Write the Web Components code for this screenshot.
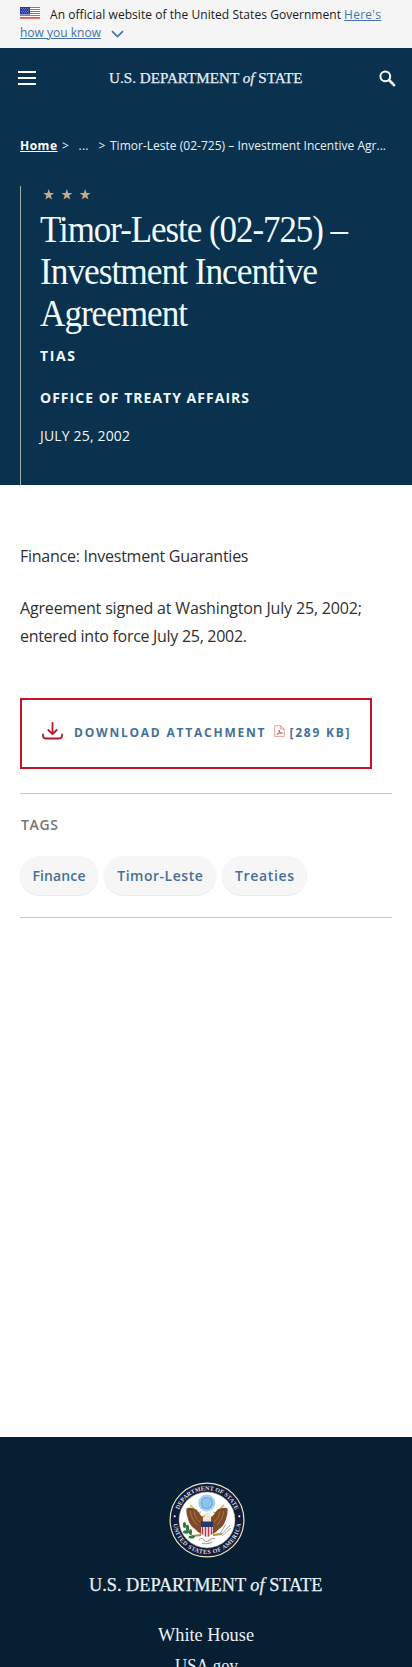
<!DOCTYPE html>
<html lang="en"><head><meta charset="utf-8"><title>Timor-Leste (02-725) – Investment Incentive Agreement</title>
<style>html,body{margin:0;background:#fff}body{font-family:"Open Sans",sans-serif;width:412px;height:1667px;overflow:hidden}</style></head>
<body><state-page></state-page>
<script>
const define=(name,html)=>{
  const t=document.createElement('template');t.innerHTML=html;
  customElements.define(name,class extends HTMLElement{
    constructor(){super();this.attachShadow({mode:'open'}).append(t.content.cloneNode(true));}
  });
};
// A single line of text set to a given measure, by tracking or by condensing.
class FitLine extends HTMLElement{
  constructor(){super();this.attachShadow({mode:'open'}).innerHTML=`<style>:host{display:block;white-space:nowrap;flex:none}span{display:inline-block;transform-origin:0 0;vertical-align:top;text-decoration:var(--line,none)}</style><span><slot></slot></span>`;}
  connectedCallback(){
    const w=+this.getAttribute('w'),s=this.shadowRoot.querySelector('span');
    this.style.width=w+'px';
    const n=s.getBoundingClientRect().width;
    if(this.hasAttribute('condense'))s.style.transform=`scaleX(${w/n})`;
    else s.style.letterSpacing=(w-n)/(this.textContent.length-1)+'px';
  }
}
define('gov-banner',`<style>
:host{display:block;height:42px;padding:6px 20px 0;background:#f5f5f5;font-size:12px;line-height:18px;color:#1b1b1b}
div{display:flex;align-items:center}.link{color:#4773aa;--line:underline}
.flag{margin:-4px 10px 0 0}.chev{margin:1px 0 0 10px}</style>
<div><svg class="flag" width="20" height="12" viewBox="0 0 20 12"><path fill="#fff" d="M0 0h20v12H0z"/><path stroke="#db3e1f" stroke-width="1" d="M0 .5h20M0 2.5h20M0 4.5h20M0 6.5h20M0 8.5h20M0 10.5h20M0 11.7h20" opacity=".85"/><path fill="#2a3aa0" d="M0 0h10v7.5H0z"/><path stroke="#a9b2e0" stroke-width=".7" stroke-dasharray=".8 1.2" d="M1 1.5h8M2 3h8M1 4.5h8M2 6h8"/></svg>
<fit-line w="291">An official website of the United States Government</fit-line><fit-line class="link" w="37" style="margin-left:3px">Here's</fit-line></div>
<div><fit-line class="link" w="81">how you know</fit-line><svg class="chev" width="13" height="8" viewBox="0 0 13 8"><path d="M1 1.2l5.5 5.3L12 1.2" fill="none" stroke="#4773aa" stroke-width="1.7"/></svg></div>`);
define('site-header',`<style>
:host{display:flex;height:60px;align-items:center;padding:0 16px 0 18px;color:#fff}
.logo{display:flex;font:15.4px/20px "Liberation Serif",serif;margin:0 76.500px 0 73px;color:#e4eef6;padding-bottom:1px;-webkit-text-stroke:.25px #e4eef6}</style>
<svg width="18" height="14" viewBox="0 0 18 14"><path d="M0 1h18M0 7h18M0 13h18" stroke="#fff" stroke-width="2"/></svg>
<div class="logo"><fit-line condense w="193.5">U.S. DEPARTMENT <i>of</i> STATE</fit-line></div>
<svg width="17" height="17" viewBox="0 0 17 17"><circle cx="6.3" cy="6.3" r="4.9" fill="none" stroke="#fff" stroke-width="2"/><path d="M10 10l5.8 5.8" stroke="#fff" stroke-width="2.6"/></svg>`);
define('bread-crumbs',`<style>:host{display:flex;height:18px;margin:29px 20px 0;font-size:12px;line-height:18px;color:#e6f0f7}b{font-weight:700;--line:underline;color:#fff}</style>
<b><fit-line w="37">Home</fit-line></b><fit-line w="7" style="margin-left:5px">&gt;</fit-line><fit-line w="10" style="margin-left:9.5px">...</fit-line><fit-line w="7" style="margin-left:10px">&gt;</fit-line><fit-line w="276" style="margin-left:4.5px">Timor-Leste (02-725) – Investment Incentive Agr...</fit-line>`);
define('page-hero',`<style>
:host{display:block;height:298.5px;margin:31px 0 0 20px;border-left:1px solid #9fb0a8;padding-left:19px;box-sizing:border-box;color:#fff}
.stars{display:block;padding:3px 0 0 1px}h1{margin:8.500px 0 11.500px;font:400 37px/42px "Liberation Serif",serif;color:#f0fbff;letter-spacing:-1.100px}
.m{font-size:14px;line-height:20px;font-weight:700;color:#eef8ff}</style>
<svg class="stars" width="52" height="11" viewBox="0 0 52 11"><defs><path id="s" d="M5.7 0l1.35 3.9 4.1.1-3.3 2.5 1.2 4-3.35-2.35L2.35 10.5l1.2-4L.25 4l4.1-.1z"/></defs><g fill="#c8aa8a"><use href="#s" x="2"/><use href="#s" x="20.2"/><use href="#s" x="38.4"/></g></svg>
<h1><fit-line condense w="307">Timor-Leste (02-725) –</fit-line><fit-line condense w="277">Investment Incentive</fit-line><fit-line condense w="147">Agreement</fit-line></h1>
<fit-line class="m" w="35">TIAS</fit-line><fit-line class="m" w="209" style="margin-top:22px">OFFICE OF TREATY AFFAIRS</fit-line><fit-line class="m" w="90" style="margin-top:18px;font-weight:400">JULY 25, 2002</fit-line>`);
define('file-download',`<style>
:host{display:flex;width:352px;height:71px;box-sizing:border-box;border:2px solid #c4122a;margin-top:48px;padding:22px 0 0 20px;font-weight:700;font-size:12px;line-height:20px;color:#45709a}</style>
<svg width="21" height="19" viewBox="0 0 21 19" fill="none" stroke="#b5172f" stroke-width="1.8" stroke-linecap="round" stroke-linejoin="round"><path d="M10.5 1v11M6.3 8l4.2 4.2L14.7 8M1 12.5v1.2Q1 16.5 4 16.5h13q3 0 3-2.8v-1.2"/></svg>
<fit-line w="190.5" style="margin:1px 9px 0 11px">DOWNLOAD ATTACHMENT</fit-line>
<svg width="11" height="13" viewBox="0 0 11 13" fill="none" stroke="#df8583" stroke-width=".8" style="margin-top:3px"><path d="M.7.7h6l3.5 3.4v7.3H.7zM6.7.7v3.4h3.5"/><path stroke="#c94447" d="M3 9.6c2-.8 2.6-3.3 2.3-4.6-1 1.6 1 3.8 3.2 3.2C6.8 7.4 4.2 8 3 9.6z"/></svg>
<fit-line w="60" style="margin:1px 0 0 5px">[289 KB]</fit-line>`);
define('tag-pill',`<style>:host{display:flex;justify-content:center;height:39px;border-radius:20px;background:#f6f6f6;box-shadow:0 1px 1px #e9e9e9;font-weight:600;font-size:14px;line-height:39px;color:#45709a;box-sizing:border-box}</style><slot></slot>`);
define('tag-list',`<style>:host{display:block;margin-top:24px;border:solid #c8c8c8;border-width:1px 0;height:125px;box-sizing:border-box}
h2{margin:21px 0 21px 1px;font-size:14px;line-height:20px;font-weight:600;color:#757575}div{display:flex;gap:6px}</style>
<h2><fit-line w="37">TAGS</fit-line></h2><div><tag-pill style="width:78px"><fit-line w="53">Finance</fit-line></tag-pill><tag-pill style="width:112px"><fit-line w="85.5">Timor-Leste</fit-line></tag-pill><tag-pill style="width:85px"><fit-line w="59">Treaties</fit-line></tag-pill></div>`);
define('article-body',`<style>:host{display:block;padding:57px 20px 0;height:952.5px;box-sizing:border-box;font-size:16px;line-height:28px;color:#303030}</style>
<fit-line w="228.5">Finance: Investment Guaranties</fit-line><fit-line w="342" style="margin-top:24px">Agreement signed at Washington July 25, 2002;</fit-line><fit-line w="227">entered into force July 25, 2002.</fit-line>
<file-download></file-download><tag-list></tag-list>`);
define('state-seal',`<style>:host{display:block;width:76px;height:76px}svg{display:block}text{font:700 6.1px "Liberation Serif",serif;fill:#dcdfe4}</style>
<svg width="76" height="76" viewBox="-38 -38 76 76"><defs><path id="up" d="M-29.8 0A29.8 29.8 0 0 1 29.8 0"/><path id="dn" d="M-34 0A34 34 0 0 0 34 0"/></defs>
<circle r="36.9" fill="#111c3c" stroke="#e9e4bb" stroke-width="1.2"/><circle r="28" fill="#fff" stroke="#a5a17e" stroke-width=".5"/>
<text><textPath href="#up" startOffset="10.5" textLength="73">DEPARTMENT OF STATE</textPath></text><text><textPath href="#dn" startOffset="4" textLength="99">UNITED STATES OF AMERICA</textPath></text>
<circle cx="-32.3" cy="-3.8" r="1" fill="#fff"/><circle cx="32.3" cy="-3.8" r="1" fill="#fff"/>
<circle cx="-.2" cy="-17" r="8.5" fill="#a4d0f3"/><circle cx="-.2" cy="-17" r="6" fill="#5ba3dd"/><circle cx="-.2" cy="-17" r="4.6" fill="#8cc4ef" stroke="#d9edfb" stroke-width=".7" stroke-dasharray="1 1"/>
<path d="M-6-8C-12-5-12-12-17-15M6-8C12-5 12-12 17-15" fill="none" stroke="#d7b96b" stroke-width="1.6"/>
<g fill="#804c28"><path d="M-2-3C-7-2-8-10-12-11-17-13-19-12-20.500-11.500-21-8-20-4-19.500-3-19 0-18 2-17.500 3-16 6-14 8-12 9-10 11-8 13-6 14L-4 10 4 10 6 14C8 13 10 11 12 9 14 8 16 6 17.500 3 18 2 19 0 19.500-3 20-4 21-8 20.500-11.500 19-12 17-13 12-11 8-10 7-2 2-3z"/></g>
<path d="M-17-9c1 5 3 10 7 14M-13-9c1 5 2 8 6 11M17-9c-1 5-3 10-7 14M13-9c-1 5-2 8-6 11" stroke="#b18157" stroke-width=".8" fill="none"/>
<path d="M-4 2Q-5-6 0-8 5-6 4 2z" fill="#f1e6d2"/><path d="M-2-5l-3 1 2 1.500z" fill="#d3a32e"/>
<path d="M-6 2h12v10q-2 4-6 5-4-1-6-5z" fill="#f0e8ea"/><path d="M-4.500 6v8.500M-1.500 6v10.500M1.500 6v10.500M4.500 6v8.500" stroke="#b8344a" stroke-width="1.4"/><path d="M-6 1.500H6V7H-6z" fill="#26376f"/>
<path d="M-6 15l-9 1M6 15l9-1" stroke="#b48939" stroke-width="2.200"/><path d="M-12 17C-17 15-20 11-21 5" stroke="#42764a" stroke-width="1" fill="none"/>
<g fill="#2f7a3f"><ellipse cx="-22.500" cy="5" rx="1.600" ry="3"/><ellipse cx="-19.500" cy="8" rx="1.600" ry="3.300"/><ellipse cx="-21" cy="12" rx="3" ry="1.700"/><ellipse cx="-16.500" cy="12" rx="1.500" ry="3"/><ellipse cx="-15.500" cy="17" rx="3" ry="1.600"/></g>
<path d="M13 14l6-10M14 15l9-10M15 16l9-8" stroke="#9b9b9a" stroke-width=".9"/><path d="M-8 20q3-3 5 0t6 0 5-1M-5 23q5 2 10-1" fill="none" stroke="#aaa290" stroke-width="1.100"/></svg>`);
define('site-footer',`<style>:host{display:flex;flex-direction:column;align-items:center;height:230px;box-sizing:border-box;overflow:hidden;background:#071f33;padding-top:45px;color:#e8f2fa;font:18.800px/31px "Liberation Serif",serif}
.logo{-webkit-text-stroke:.25px #e8f2fa}</style>
<state-seal style="margin-left:2px"></state-seal><fit-line class="logo" condense w="233.5" style="margin-top:11px">U.S. DEPARTMENT <i>of</i> STATE</fit-line>
<fit-line condense w="96" style="margin-top:18.500px">White House</fit-line><fit-line condense w="63">USA.gov</fit-line>`);
define('state-page',`<style>:host{display:block}header{height:436.5px;background:#0a314d;overflow:hidden}</style>
<gov-banner></gov-banner><header><site-header></site-header><bread-crumbs></bread-crumbs><page-hero></page-hero></header><article-body></article-body><site-footer></site-footer>`);
customElements.define('fit-line',FitLine);
</script></body></html>
